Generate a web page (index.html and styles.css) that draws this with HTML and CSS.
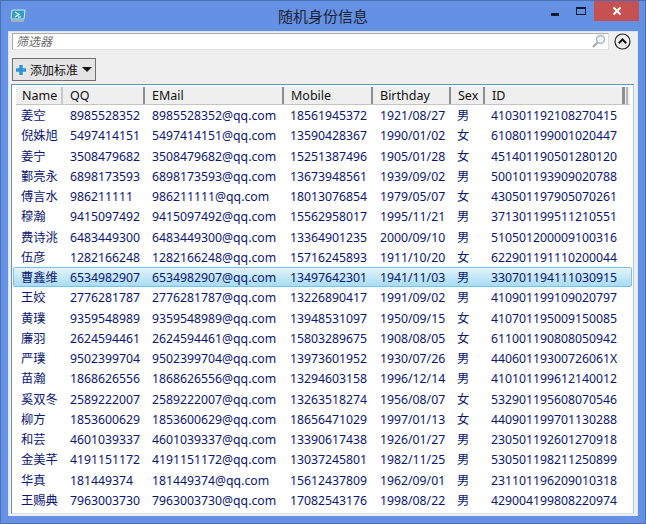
FILE: index.html
```html
<!DOCTYPE html>
<html lang="zh-CN">

<head>
    <meta charset="UTF-8">
    <title>随机身份信息</title>
    <link rel="stylesheet" href="styles.css">
</head>

<body>
    <div class="window">
        <div class="title-bar">
            <svg class="app-icon" width="16" height="14" viewBox="0 0 16 14">
                <path d="M2 1h13l-1 9H1z" fill="#2f9fc8" stroke="#cfe6ee" stroke-width="1"/>
                <path d="M5 3l4 2.5-4 2.5" fill="none" stroke="#fff" stroke-width="1.2"/>
                <path d="M8 8h3" stroke="#fff"/>
                <path d="M1 11h13v2H1z" fill="#9fb4bc"/>
            </svg>
            <div class="title">随机身份信息</div>
            <div class="controls">
                <div class="ctl ctl-min"><span></span></div>
                <div class="ctl ctl-max"><span></span></div>
                <div class="ctl ctl-close">
                    <svg width="10" height="10" viewBox="0 0 10 10"><path d="M1.5 1.5l7 7M8.5 1.5l-7 7" stroke="#fff" stroke-width="2"/></svg>
                </div>
            </div>
        </div>

        <div class="client">
            <div class="filter-row">
                <div class="filter-box">
                    <span class="placeholder">筛选器</span>
                    <svg width="15" height="15" viewBox="0 0 15 15">
                        <circle cx="9.5" cy="5.5" r="4" fill="#eef4f8" stroke="#a9b8c2" stroke-width="1.4"/>
                        <path d="M6.5 8.5L2 13" stroke="#a8a8a8" stroke-width="2.2"/>
                    </svg>
                </div>
                <svg class="collapse" width="17" height="17" viewBox="0 0 17 17">
                    <circle cx="8.5" cy="8.5" r="7.5" fill="none" stroke="#222" stroke-width="1.2"/>
                    <path d="M4.8 10.2L8.5 6.5l3.7 3.7" fill="none" stroke="#111" stroke-width="2"/>
                </svg>
            </div>

            <div class="add-row">
                <div class="add-btn">
                    <svg width="10" height="10" viewBox="0 0 10 10"><path d="M3.3 0h3.4v3.3H10v3.4H6.7V10H3.3V6.7H0V3.3h3.3z" fill="#2f93cf"/></svg>
                    <span>添加标准</span>
                    <i class="caret"></i>
                </div>
            </div>

            <div class="list">
                <div class="head">
                    <div class="hd">Name</div>
                    <div class="hd">QQ</div>
                    <div class="hd">EMail</div>
                    <div class="hd">Mobile</div>
                    <div class="hd">Birthday</div>
                    <div class="hd">Sex</div>
                    <div class="hd">ID</div>
                    <div class="hd hd-end"></div>
                </div>
                <div class="rows">
                    <div class="row"><span>姜空</span><span>8985528352</span><span>8985528352@qq.com</span><span>18561945372</span><span>1921/08/27</span><span>男</span><span>410301192108270415</span></div>
                    <div class="row"><span>倪姝旭</span><span>5497414151</span><span>5497414151@qq.com</span><span>13590428367</span><span>1990/01/02</span><span>女</span><span>610801199001020447</span></div>
                    <div class="row"><span>姜宁</span><span>3508479682</span><span>3508479682@qq.com</span><span>15251387496</span><span>1905/01/28</span><span>女</span><span>451401190501280120</span></div>
                    <div class="row"><span>鄞亮永</span><span>6898173593</span><span>6898173593@qq.com</span><span>13673948561</span><span>1939/09/02</span><span>男</span><span>500101193909020788</span></div>
                    <div class="row"><span>傅言水</span><span>986211111</span><span>986211111@qq.com</span><span>18013076854</span><span>1979/05/07</span><span>女</span><span>430501197905070261</span></div>
                    <div class="row"><span>穆瀚</span><span>9415097492</span><span>9415097492@qq.com</span><span>15562958017</span><span>1995/11/21</span><span>男</span><span>371301199511210551</span></div>
                    <div class="row"><span>费诗洮</span><span>6483449300</span><span>6483449300@qq.com</span><span>13364901235</span><span>2000/09/10</span><span>男</span><span>510501200009100316</span></div>
                    <div class="row"><span>伍彦</span><span>1282166248</span><span>1282166248@qq.com</span><span>15716245893</span><span>1911/10/20</span><span>女</span><span>622901191110200044</span></div>
                    <div class="row selected"><span>曹鑫维</span><span>6534982907</span><span>6534982907@qq.com</span><span>13497642301</span><span>1941/11/03</span><span>男</span><span>330701194111030915</span></div>
                    <div class="row"><span>王姣</span><span>2776281787</span><span>2776281787@qq.com</span><span>13226890417</span><span>1991/09/02</span><span>男</span><span>410901199109020797</span></div>
                    <div class="row"><span>黄璞</span><span>9359548989</span><span>9359548989@qq.com</span><span>13948531097</span><span>1950/09/15</span><span>女</span><span>410701195009150085</span></div>
                    <div class="row"><span>廉羽</span><span>2624594461</span><span>2624594461@qq.com</span><span>15803289675</span><span>1908/08/05</span><span>女</span><span>611001190808050942</span></div>
                    <div class="row"><span>严璞</span><span>9502399704</span><span>9502399704@qq.com</span><span>13973601952</span><span>1930/07/26</span><span>男</span><span>44060119300726061X</span></div>
                    <div class="row"><span>苗瀚</span><span>1868626556</span><span>1868626556@qq.com</span><span>13294603158</span><span>1996/12/14</span><span>男</span><span>410101199612140012</span></div>
                    <div class="row"><span>奚双冬</span><span>2589222007</span><span>2589222007@qq.com</span><span>13263518274</span><span>1956/08/07</span><span>女</span><span>532901195608070546</span></div>
                    <div class="row"><span>柳方</span><span>1853600629</span><span>1853600629@qq.com</span><span>18656471029</span><span>1997/01/13</span><span>女</span><span>440901199701130288</span></div>
                    <div class="row"><span>和芸</span><span>4601039337</span><span>4601039337@qq.com</span><span>13390617438</span><span>1926/01/27</span><span>男</span><span>230501192601270918</span></div>
                    <div class="row"><span>金美芊</span><span>4191151172</span><span>4191151172@qq.com</span><span>13037245801</span><span>1982/11/25</span><span>男</span><span>530501198211250899</span></div>
                    <div class="row"><span>华真</span><span>181449374</span><span>181449374@qq.com</span><span>15612437809</span><span>1962/09/01</span><span>男</span><span>231101196209010318</span></div>
                    <div class="row"><span>王赐典</span><span>7963003730</span><span>7963003730@qq.com</span><span>17082543176</span><span>1998/08/22</span><span>男</span><span>429004199808220974</span></div>
                </div>
            </div>
        </div>
    </div>
</body>

</html>
```

FILE: styles.css
```css
html, body {
    margin: 0;
    padding: 0;
}
body {
    font-family: "Noto Sans", "Noto Sans CJK SC", sans-serif;
    font-size: 12.25px;
    color: #0a1670;
    overflow: hidden;
}
.window {
    width: 646px;
    height: 524px;
    box-sizing: border-box;
    background-color: #6591e4;
    border: 1px solid #4a6fb5;
    display: flex;
    flex-direction: column;
}
.title-bar {
    height: 30px;
    flex: none;
    display: flex;
    align-items: flex-start;
    position: relative;
}
.app-icon {
    margin: 8px 0 0 9px;
}
.title {
    position: absolute;
    left: 0;
    right: 0;
    top: 5px;
    text-align: center;
    font-size: 15px;
    line-height: 20px;
    color: #1b2433;
}
.controls {
    margin-left: auto;
    display: flex;
    margin-right: 6px;
    position: relative;
}
.ctl {
    height: 20px;
    display: flex;
    align-items: center;
    justify-content: center;
}
.ctl-min {
    width: 26px;
}
.ctl-min span {
    width: 8px;
    height: 3px;
    background-color: #111b2e;
    margin-top: 6px;
}
.ctl-max {
    width: 26px;
}
.ctl-max span {
    display: block;
    width: 8px;
    height: 5px;
    border: 1px solid #111b2e;
    border-top-width: 2px;
    margin-bottom: 1px;
}
.ctl-close {
    width: 45px;
    background-color: #c75050;
}
.client {
    flex: 1;
    margin: 0 7px 7px;
    background-color: #efefef;
    border: 1px solid #d7e4f2;
    border-bottom: none;
    display: flex;
    flex-direction: column;
    min-height: 0;
}
.filter-row {
    display: flex;
    align-items: flex-start;
    padding: 1px 4px 0 3px;
    height: 19px;
    box-sizing: border-box;
    flex: none;
}
.filter-box {
    width: 597px;
    height: 17px;
    box-sizing: border-box;
    background-color: #fff;
    border: 1px solid #ababab;
    border-right-color: #dcdcdc;
    border-bottom-color: #e3e3e3;
    display: flex;
    align-items: center;
    justify-content: space-between;
    padding: 0 2px 0 3px;
}
.placeholder {
    font-style: italic;
    color: #6d6d6d;
    font-size: 12px;
    line-height: 15px;
}
.collapse {
    margin-left: 5px;
}
.add-row {
    height: 33px;
    flex: none;
    padding: 7px 0 0 3px;
    box-sizing: border-box;
}
.add-btn {
    width: 84px;
    height: 23px;
    box-sizing: border-box;
    border: 1px solid #707070;
    background-color: #e4e4e4;
    display: flex;
    align-items: center;
    padding-left: 3px;
    color: #111;
    font-size: 12px;
}
.add-btn span {
    margin-left: 4px;
}
.caret {
    width: 0;
    height: 0;
    border-top: 5px solid #111;
    border-left: 5px solid transparent;
    border-right: 5px solid transparent;
    margin-left: 4px;
}
.list {
    flex: 1;
    margin: 0 3px 2px 2px;
    background-color: #fff;
    border: 1px solid #5b95c8;
    border-bottom-color: #cfe3f2;
    border-right-color: #a9cbe6;
    padding: 2px 3px 0 4px;
    min-height: 0;
    overflow: hidden;
}
.head {
    display: grid;
    grid-template-columns: 47px 82px 139px 89px 78px 34px 139px 1fr;
    height: 18px;
    background-color: #efefef;
    border-bottom: 1px solid #c4c4c4;
    box-sizing: border-box;
    color: #111;
    font-size: 12.5px;
}
.hd {
    padding-left: 7px;
    line-height: 17px;
    border-right: 2px solid #8e8e8e;
    box-sizing: border-box;
}
.hd:first-child {
    padding-left: 6px;
    border-right-color: #c8c8c8;
}
.hd-end {
    border-right-color: #b5b5b5;
    border-left: 1px solid #8e8e8e;
    padding: 0;
    margin-right: 2px;
}
.rows {
    margin: 0 -2px 0 -3px;
}
.row {
    display: grid;
    grid-template-columns: 49px 82px 138px 90px 77px 34px 1fr;
    height: 20.25px;
    line-height: 20px;
    padding-left: 1px;
    box-sizing: border-box;
    border: 1px solid transparent;
    border-radius: 2px;
}
.row span {
    padding-left: 6px;
    white-space: nowrap;
}
.selected {
    background: linear-gradient(#e4f3fc, #a6dcf7);
    border-color: #7fc0e6;
}
```
